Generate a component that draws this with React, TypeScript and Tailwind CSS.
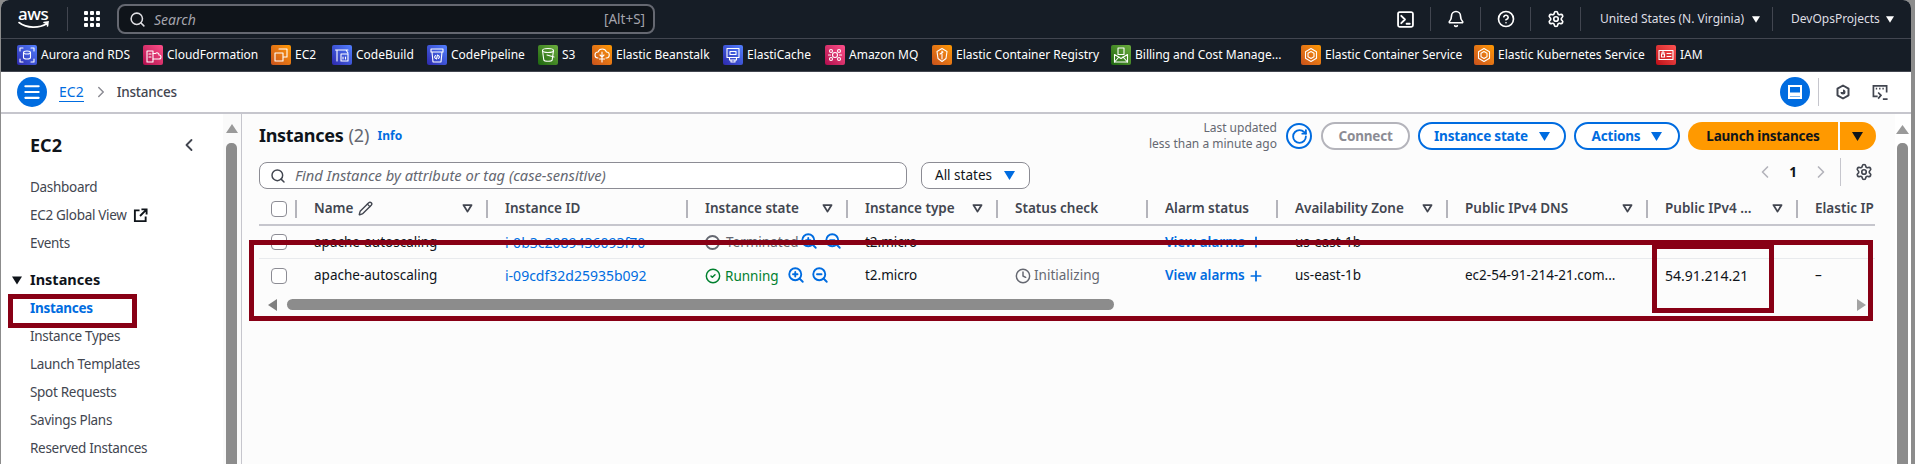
import React from "react";
import { Search, Bell, CircleHelp, Settings, ChevronLeft, ChevronRight, Pencil, ZoomIn, ZoomOut, Clock, CircleCheck, Plus, RotateCw, Menu } from "lucide-react";

function Svc({ bg, children }: { bg: string; children: React.ReactNode }) {
  return (
    <span className={`w-[20px] h-[20px] rounded-[2px] shrink-0 flex items-center justify-center ${bg}`}>
      <svg viewBox="0 0 20 20" className="w-[20px] h-[20px]" fill="none" stroke="white" strokeWidth="1.1" strokeLinejoin="round" strokeLinecap="round">
        {children}
      </svg>
    </span>
  );
}

const blue = "bg-linear-to-tr from-[#2e27ad] to-[#527fff]";
const pink = "bg-linear-to-tr from-[#b0084d] to-[#ff4f8b]";
const orange = "bg-linear-to-tr from-[#c8511b] to-[#ff9900]";
const green = "bg-linear-to-tr from-[#1b660f] to-[#6cae3e]";
const red = "bg-linear-to-tr from-[#bd0816] to-[#ff5252]";

const hexMark = (
  <>
    <path d="M10 3.5l5.5 3.2v6.6L10 16.5l-5.500-3.200V6.700z" />
    <path d="M10 6.500l3 1.700v3.600l-3 1.700-3-1.700V8.200z" />
  </>
);

const services: { name: string; w: string; bg: string; icon: React.ReactNode }[] = [
  { name: "Aurora and RDS", w: "w-[126px]", bg: blue, icon: <><ellipse cx="10" cy="7.500" rx="3.500" ry="1.500" /><path d="M6.500 7.500v5c0 .8 1.600 1.500 3.500 1.500s3.500-.7 3.500-1.500v-5" /><path d="M3 6V3h3M14 3h3v3M3 14v3h3M14 17h3v-3" /></> },
  { name: "CloudFormation", w: "w-[128px]", bg: pink, icon: <><path d="M4 6h6v11H4z" /><path d="M10 8.500h2.500a2 2 0 0 1 3.500 1.500 2 2 0 0 1 0 4H10" /><path d="M6 9h2M6 12h2" /></> },
  { name: "EC2", w: "w-[61px]", bg: orange, icon: <><path d="M8 4h8v8h-3M4 8h8v8H4z" /></> },
  { name: "CodeBuild", w: "w-[95px]", bg: blue, icon: <><path d="M3.500 5h12.500M5 5v11M14 5l2 3M9 9h7v7H9z" /><path d="M11 12v2M13.500 12v2" /></> },
  { name: "CodePipeline", w: "w-[111px]", bg: blue, icon: <><path d="M4 4h12v3H4zM5 7l1 10h8l1-10" /><path d="M8.500 10.500L7.500 12l1 1.500M11.500 10.500l1 1.500-1 1.500M10.500 10l-1 4" /></> },
  { name: "S3", w: "w-[54px]", bg: green, icon: <><ellipse cx="10" cy="5.500" rx="5.500" ry="2" /><path d="M4.500 5.500l1.300 9.500c.3.800 2.200 1.300 4.200 1.300s3.900-.5 4.200-1.300l1.300-9.500" /><path d="M9 10l7 2" /></> },
  { name: "Elastic Beanstalk", w: "w-[131px]", bg: orange, icon: <><path d="M6 13a3 3 0 0 1 0-6 4.500 4.500 0 0 1 8.500 0 3 3 0 0 1-.5 6" /><path d="M10 7v10M8 10l2 2 2-2M7.500 14h5" /></> },
  { name: "ElastiCache", w: "w-[102px]", bg: blue, icon: <><path d="M4 3.500h12v9H4zM6.500 12.500V15h7v-2.500M8 15v2h4v-2" /><path d="M7 6.500h6v3H7z" /></> },
  { name: "Amazon MQ", w: "w-[107px]", bg: pink, icon: <><circle cx="10" cy="10" r="2.500" /><circle cx="6" cy="6" r="1.500" /><circle cx="14" cy="6" r="1.500" /><circle cx="6" cy="14" r="1.500" /><circle cx="14" cy="14" r="1.500" /><path d="M3.500 10h2M14.500 10h2" /></> },
  { name: "Elastic Container Registry", w: "w-[179px]", bg: orange, icon: <><path d="M10 3.500l5 3-1 7-4 3-4-3-1-7z" /><path d="M10 6v8M8 9l3-2" /></> },
  { name: "Billing and Cost Manage...", w: "w-[190px]", bg: green, icon: <><path d="M7 3h6v6.500H7z" /><path d="M3.500 9.500V17h13V9.500L10 13.500z" /><path d="M3.500 17l4.500-5M16.500 17L12 12" /></> },
  { name: "Elastic Container Service", w: "w-[173px]", bg: orange, icon: hexMark },
  { name: "Elastic Kubernetes Service", w: "w-[182px]", bg: orange, icon: hexMark },
  { name: "IAM", w: "w-[60px]", bg: red, icon: <><path d="M3 5.500h14v9H3z" /><path d="M5.500 9h3v3h-3zM6 9V7.800a1 1 0 0 1 2 0V9M11 8.500h4M11 11.500h4" /></> },
];

function NavCell({ children }: { children: React.ReactNode }) {
  return (
    <div className="w-[50px] h-[24px] flex items-center justify-center border-r border-[#424650] text-white">{children}</div>
  );
}

function Caret({ className }: { className: string }) {
  return (
    <svg viewBox="0 0 10 8" className={className}>
      <path d="M0 0h10L5 8z" fill="currentColor" />
    </svg>
  );
}

function Filter() {
  return (
    <svg viewBox="0 0 12 10" className="w-[11px] h-[9px] mr-[13px] ml-auto shrink-0 text-[#424650]" fill="none" stroke="currentColor" strokeWidth="2" strokeLinejoin="round">
      <path d="M1.500 1.200h9L6 8.500z" />
    </svg>
  );
}

function Checkbox() {
  return <span className="block w-[16px] h-[16px] rounded-[4px] border border-[#8c8c94] bg-white shrink-0" />;
}

const cols = [
  { label: "Name", w: "w-[191px]", filter: true, pencil: true },
  { label: "Instance ID", w: "w-[200px]", filter: false },
  { label: "Instance state", w: "w-[160px]", filter: true },
  { label: "Instance type", w: "w-[150px]", filter: true },
  { label: "Status check", w: "w-[150px]", filter: false },
  { label: "Alarm status", w: "w-[130px]", filter: false },
  { label: "Availability Zone", w: "w-[170px]", filter: true },
  { label: "Public IPv4 DNS", w: "w-[200px]", filter: true },
  { label: "Public IPv4 ...", w: "w-[150px]", filter: true },
];

function Cell({ w, children }: { w: string; children?: React.ReactNode }) {
  return <div className={`${w} shrink-0 pl-[17px] flex items-center whitespace-nowrap overflow-hidden`}>{children}</div>;
}

function ZoomPair() {
  return (
    <>
      <ZoomIn className="w-[18px] h-[18px] ml-[1px] text-[#006ce0] shrink-0 -mt-[2px]" strokeWidth={2.500} />
      <ZoomOut className="w-[18px] h-[18px] ml-[6px] text-[#006ce0] shrink-0 -mt-[2px]" strokeWidth={2.500} />
    </>
  );
}

function Row({ id, state, status, dns, ip, eip, border }: { id: string; state: React.ReactNode; status?: React.ReactNode; dns?: string; ip?: string; eip?: string; border?: boolean }) {
  return (
    <div className={`flex h-[33px] items-stretch text-[#0f141a] ${border ? "border-b border-[#e8eaed]" : ""}`}>
      <div className="w-[38px] shrink-0 pl-[12px] flex items-center"><Checkbox /></div>
      <Cell w="w-[191px]">apache-autoscaling</Cell>
      <Cell w="w-[200px]"><span className="text-[#006ce0] text-[14px]">{id}</span></Cell>
      <Cell w="w-[160px]">{state}</Cell>
      <Cell w="w-[150px]">t2.micro</Cell>
      <Cell w="w-[150px]">{status}</Cell>
      <Cell w="w-[130px]">
        <span className="text-[#006ce0] font-semibold">View alarms</span>
        <Plus className="w-[16px] h-[16px] ml-[3px] text-[#006ce0]" strokeWidth={2.600} />
      </Cell>
      <Cell w="w-[170px]">us-east-1b</Cell>
      <Cell w="w-[200px]">{dns}</Cell>
      <Cell w="w-[150px]"><span className="text-[14px]">{ip}</span></Cell>
      <Cell w="w-[77px]">{eip}</Cell>
    </div>
  );
}

function OutlineBtn({ children, w }: { children: React.ReactNode; w: string }) {
  return (
    <button className={`${w} h-[28px] rounded-full border-2 border-[#006ce0] text-[#006ce0] font-bold text-[13.500px] tracking-[-0.2px] flex items-center justify-center gap-[11px] bg-white`}>
      {children}
    </button>
  );
}

function SideItem({ children, active }: { children: React.ReactNode; active?: boolean }) {
  return (
    <div className={`h-[28px] pl-[29px] flex items-center text-[13.500px] tracking-[-0.3px] ${active ? "text-[#006ce0] font-bold" : "text-[#424650]"}`}>{children}</div>
  );
}

export default function App() {
  return (
    <div className="w-[1915px] h-[464px] overflow-hidden relative bg-[#8c8c8c] pl-px pr-[4px] text-[13.500px] [font-family:'Noto_Sans',sans-serif]">
      <div className="w-full h-full rounded-t-[8px] overflow-hidden flex flex-col bg-white">
        {/* top nav */}
        <div className="h-[39px] shrink-0 bg-[#161d26] border-b border-[#424650] flex items-center text-white">
          <div className="w-[66px] h-[38px] shrink-0 relative pl-[17px] flex flex-col">
            <span className="text-[17px] leading-[17px] mt-[5px] font-medium tracking-[-0.5px]">aws</span>
            <svg viewBox="0 0 32 9" className="w-[32px] h-[9px] -mt-[1px]" fill="none" stroke="white" strokeWidth="1.600" strokeLinecap="round">
              <path d="M1 1.500c8 6 20 6 28 1M26 1.500l4-.5-.5 4" />
            </svg>
          </div>
          <div className="w-px h-[24px] bg-[#424650] shrink-0" />
          <div className="ml-[16px] w-[16px] h-[16px] grid grid-cols-3 gap-[2px] shrink-0">
            {Array.from({ length: 9 }).map((_, i) => <span key={i} className="bg-white rounded-[1px]" />)}
          </div>
          <div className="ml-[17px] w-[538px] h-[30px] rounded-[8px] border-2 border-[#656871] bg-[#0f141a] flex items-center pl-[10px] pr-[8px] text-[14px]">
            <Search className="w-[17px] h-[17px] text-[#dedee3] shrink-0" strokeWidth={2.200} />
            <span className="ml-[8px] italic text-[#a4a4ad]">Search</span>
            <span className="ml-auto text-[#a4a4ad] text-[13.500px]">[Alt+S]</span>
          </div>
          <div className="ml-auto flex items-center">
            <NavCell>
              <svg viewBox="0 0 16 16" className="w-[17px] h-[17px]" fill="none" stroke="white" strokeWidth="1.700" strokeLinecap="round" strokeLinejoin="round">
                <rect x="1" y="1" width="14" height="14" rx="1.500" />
                <path d="M4 4.500L7.500 8 4 11.500M9 12h3" />
              </svg>
            </NavCell>
            <NavCell><Bell className="w-[18px] h-[18px]" strokeWidth={2.200} /></NavCell>
            <NavCell><CircleHelp className="w-[18px] h-[18px]" strokeWidth={2.200} /></NavCell>
            <NavCell><Settings className="w-[18px] h-[18px]" strokeWidth={2.200} /></NavCell>
            <div className="w-[192px] h-[24px] pl-[19px] flex items-center border-r border-[#424650] text-[#dedee3] text-[12px] whitespace-nowrap">
              <span>United States (N. Virginia)</span>
              <Caret className="w-[8px] h-[7px] ml-[8px] text-white" />
            </div>
            <div className="w-[138px] h-[24px] pl-[18px] flex items-center text-[#dedee3] text-[12px] whitespace-nowrap">
              <span>DevOpsProjects</span>
              <Caret className="w-[8px] h-[7px] ml-[6px] text-white" />
            </div>
          </div>
        </div>
        {/* bookmarks */}
        <div className="h-[33px] shrink-0 bg-[#161d26] flex items-center pl-[16px] border-b border-[#424650]">
          {services.map((s) => (
            <div key={s.name} className={`${s.w} shrink-0 flex items-center gap-[4px] text-white text-[12px] whitespace-nowrap`}>
              <Svc bg={s.bg}>{s.icon}</Svc>
              <span>{s.name}</span>
            </div>
          ))}
        </div>
        {/* breadcrumb */}
        <div className="h-[42px] shrink-0 bg-white border-b-2 border-[#c6c6cd] flex items-center pl-[16px]">
          <span className="w-[30px] h-[30px] rounded-full bg-[#006ce0] flex items-center justify-center">
            <Menu className="w-[20px] h-[20px] text-white" strokeWidth={2.500} />
          </span>
          <span className="ml-[12px] text-[#006ce0] border-b border-[#006ce0] leading-[18px] text-[14px]">EC2</span>
          <ChevronRight className="w-[18px] h-[18px] ml-[8px] text-[#8c8c94]" strokeWidth={2} />
          <span className="ml-[7px] text-[#424650] font-medium tracking-[-0.2px]">Instances</span>
          <div className="ml-auto flex items-center pr-[22px]">
            <span className="w-[30px] h-[30px] rounded-full bg-[#006ce0] flex items-center justify-center">
              <svg viewBox="0 0 16 16" className="w-[16px] h-[16px]" fill="none" stroke="white" strokeWidth="2">
                <rect x="2" y="2" width="12" height="12" />
                <path d="M2 10.500h12" strokeWidth="4" />
              </svg>
            </span>
            <span className="w-px h-[28px] bg-[#c6c6cd] ml-[8px]" />
            <svg viewBox="0 0 16 16" className="w-[16px] h-[16px] ml-[16px]" fill="none" stroke="#424650" strokeWidth="2" strokeLinejoin="round">
              <path d="M8 1.500l5.500 3.200v6.600L8 14.500l-5.500-3.200V4.700z" />
              <path d="M8 5.500a2.500 2.500 0 1 1-2.500 2.500L8 8z" fill="#424650" stroke="none" />
            </svg>
            <svg viewBox="0 0 18 18" className="w-[17px] h-[17px] ml-[21px]" fill="none" stroke="#424650" strokeWidth="1.800">
              <path d="M6 13H1.500V2h14v7" />
              <path d="M4 5h1.500M7.500 5H9M11 5h1.500" />
              <path d="M6.500 9l3 3-3 3.500M11.500 16h5" />
            </svg>
          </div>
        </div>
        {/* body */}
        <div className="flex-1 flex min-h-0">
          {/* sidebar */}
          <div className="w-[241px] shrink-0 flex border-r border-[#c6c6cd] bg-white">
            <div className="w-[222px] shrink-0">
              <div className="h-[59px] pt-[3px] pl-[29px] pr-[24px] flex items-center justify-between">
                <span className="text-[18px] font-bold text-[#0f141a]">EC2</span>
                <ChevronLeft className="w-[20px] h-[20px] text-[#424650]" strokeWidth={2.200} />
              </div>
              <SideItem>Dashboard</SideItem>
              <SideItem>
                <span>EC2 Global View</span>
                <svg viewBox="0 0 16 16" className="w-[15px] h-[15px] ml-[6px]" fill="none" stroke="#0f141a" strokeWidth="2">
                  <path d="M7 2.500H2v11.500h11.500V9M9 1.500h5.500V7M14 2L7.500 8.500" />
                </svg>
              </SideItem>
              <SideItem>Events</SideItem>
              <div className="h-[28px] mt-[9px] pl-[11px] flex items-center font-bold text-[#0f141a] text-[14.500px]">
                <Caret className="w-[10px] h-[9px] mr-[8px] text-[#0f141a]" />
                <span>Instances</span>
              </div>
              <SideItem active>Instances</SideItem>
              <SideItem>Instance Types</SideItem>
              <SideItem>Launch Templates</SideItem>
              <SideItem>Spot Requests</SideItem>
              <SideItem>Savings Plans</SideItem>
              <SideItem>Reserved Instances</SideItem>
            </div>
            <div className="w-[18px] shrink-0 bg-[#fafafa] flex flex-col items-center pt-[10px]">
              <svg viewBox="0 0 12 9" className="w-[12px] h-[9px] text-[#9a9a9a] -ml-[1px]"><path d="M6 0l6 9H0z" fill="currentColor" /></svg>
              <span className="w-[11px] flex-1 mt-[10px] rounded-t-[5px] bg-[#8c8c8c] -ml-[1px]" />
            </div>
          </div>
          {/* main */}
          <div className="flex-1 min-w-0 flex bg-[#fcfcfc]">
            <div className="flex-1 min-w-0 pl-[17px] pr-[19px] pt-[8px]">
              <div className="h-[28px] flex items-center">
                <span className="text-[18px] tracking-[-0.3px] font-bold text-[#0f141a] -mt-[2px]">Instances</span>
                <span className="text-[18px] text-[#656871] ml-[5px] -mt-[2px]">(2)</span>
                <span className="text-[12px] font-bold text-[#006ce0] ml-[8px]">Info</span>
                <div className="ml-auto flex items-center">
                  <div className="text-right text-[12px] leading-[16px] text-[#656871] mr-[9px]">
                    <div>Last updated</div>
                    <div>less than a minute ago</div>
                  </div>
                  <span className="w-[26px] h-[26px] rounded-full border-2 border-[#006ce0] flex items-center justify-center bg-white">
                    <RotateCw className="w-[17px] h-[17px] text-[#006ce0]" strokeWidth={2.600} />
                  </span>
                  <button className="ml-[9px] w-[89px] h-[28px] rounded-full border-2 border-[#b4b4bb] text-[#8c8c94] font-bold text-[13.500px] tracking-[-0.2px] bg-white">Connect</button>
                  <div className="ml-[8px] flex gap-[8px]">
                    <OutlineBtn w="w-[148px]">Instance state<Caret className="w-[11px] h-[9px] text-[#006ce0]" /></OutlineBtn>
                    <OutlineBtn w="w-[106px]">Actions<Caret className="w-[11px] h-[9px] text-[#006ce0]" /></OutlineBtn>
                  </div>
                  <div className="ml-[8px] h-[28px] flex text-[#0f141a]">
                    <button className="w-[150px] rounded-l-full bg-[#ff9900] font-bold text-[13.500px] tracking-[-0.2px]">Launch instances</button>
                    <button className="w-[36px] ml-[2px] rounded-r-full bg-[#ff9900] flex items-center justify-center pr-[2px]"><Caret className="w-[11px] h-[9px] text-[#0f141a]" /></button>
                  </div>
                </div>
              </div>
              <div className="h-[28px] mt-[8px] flex">
                <div className="w-[648px] h-[27px] mt-[4px] rounded-[8px] border border-[#8c8c94] bg-white flex items-center pl-[10px] text-[14.700px]">
                  <Search className="w-[16px] h-[16px] text-[#424650]" strokeWidth={2.200} />
                  <span className="ml-[9px] italic text-[#656871]">Find Instance by attribute or tag (case-sensitive)</span>
                </div>
                <div className="ml-[14px] w-[109px] h-[27px] mt-[4px] rounded-[8px] border border-[#8c8c94] bg-white flex items-center pl-[13px] text-[#0f141a] text-[13.500px]">
                  All states
                  <Caret className="w-[11px] h-[9px] ml-[12px] text-[#006ce0]" />
                </div>
                <div className="ml-auto flex items-center h-[28px]">
                  <ChevronLeft className="w-[20px] h-[20px] text-[#b4b4bb]" strokeWidth={2} />
                  <span className="ml-[13px] font-bold text-[#0f141a] w-[10px] text-center">1</span>
                  <ChevronRight className="w-[20px] h-[20px] text-[#b4b4bb] ml-[13px]" strokeWidth={2} />
                  <span className="w-px h-[28px] bg-[#c6c6cd] ml-[9px]" />
                  <Settings className="w-[18px] h-[18px] text-[#424650] ml-[14px] mr-[3px]" strokeWidth={2.200} />
                </div>
              </div>
              {/* table */}
              <div className="w-[1616px] mt-[7px] overflow-hidden text-[13.500px]">
                <div className="flex h-[33px] items-stretch border-b-2 border-[#c6c6cd] font-semibold text-[#424650]">
                  <div className="w-[38px] shrink-0 pl-[12px] flex items-center">
                    <Checkbox />
                    <span className="ml-auto w-[2px] h-[18px] bg-[#b4b4bb]" />
                  </div>
                  {cols.map((c) => (
                    <div key={c.label} className={`${c.w} shrink-0 pl-[17px] flex items-center whitespace-nowrap`}>
                      <span>{c.label}</span>
                      {c.pencil && <Pencil className="w-[15px] h-[15px] ml-[5px] text-[#424650]" strokeWidth={2.200} />}
                      {c.filter && <Filter />}
                      <span className={`${c.filter ? "" : "ml-auto"} w-[2px] h-[18px] bg-[#b4b4bb] shrink-0`} />
                    </div>
                  ))}
                  <div className="w-[77px] shrink-0 pl-[17px] flex items-center whitespace-nowrap overflow-hidden">Elastic IP</div>
                </div>
                <Row
                  border
                  id="i-0b3c2089436093f70"
                  state={
                    <>
                      <span className="w-[15px] h-[15px] rounded-full border-2 border-[#656871] shrink-0" />
                      <span className="ml-[6px] text-[#656871]">Terminated</span>
                      <ZoomPair />
                    </>
                  }
                />
                <Row
                  id="i-09cdf32d25935b092"
                  state={
                    <>
                      <CircleCheck className="w-[16px] h-[16px] text-[#00802f] shrink-0" strokeWidth={2.200} />
                      <span className="ml-[4px] text-[#00802f] mt-[2px]">Running</span>
                      <span className="ml-[7px] flex items-center"><ZoomPair /></span>
                    </>
                  }
                  status={
                    <>
                      <Clock className="w-[16px] h-[16px] text-[#656871] shrink-0" strokeWidth={2.200} />
                      <span className="ml-[3px] text-[#656871]">Initializing</span>
                    </>
                  }
                  dns="ec2-54-91-214-21.com..."
                  ip="54.91.214.21"
                  eip="–"
                />
                <div className="flex pt-[5px] pl-[9px] items-center h-[20px]">
                  <svg viewBox="0 0 9 12" className="w-[9px] h-[12px] text-[#808080] shrink-0"><path d="M9 0v12L0 6z" fill="currentColor" /></svg>
                  <span className="w-[827px] h-[11px] ml-[10px] rounded-full bg-[#8c8c8c]" />
                  <svg viewBox="0 0 9 12" className="w-[9px] h-[12px] text-[#a3a3a3] ml-[743px] shrink-0"><path d="M0 0v12l9-6z" fill="currentColor" /></svg>
                </div>
              </div>
            </div>
            {/* right scrollbar */}
            <div className="w-[16px] shrink-0 flex flex-col pt-[11px] pl-[1px] bg-white">
              <svg viewBox="0 0 13 9" className="w-[13px] h-[9px] text-[#9a9a9a]"><path d="M6.500 0L13 9H0z" fill="currentColor" /></svg>
              <span className="w-[11px] ml-[1px] flex-1 mt-[9px] rounded-t-[5px] bg-[#8c8c8c]" />
            </div>
          </div>
        </div>
      </div>
      {/* annotation rectangles drawn over the screenshot */}
      <div className="absolute left-[8px] top-[294px] w-[129px] h-[34px] border-[5px] border-[#880015]" />
      <div className="absolute left-[249px] top-[240px] w-[1624px] h-[81px] border-[5px] border-[#880015]" />
      <div className="absolute left-[1652px] top-[245px] w-[122px] h-[68px] border-[5px] border-t-[4px] border-[#880015]" />
    </div>
  );
}
